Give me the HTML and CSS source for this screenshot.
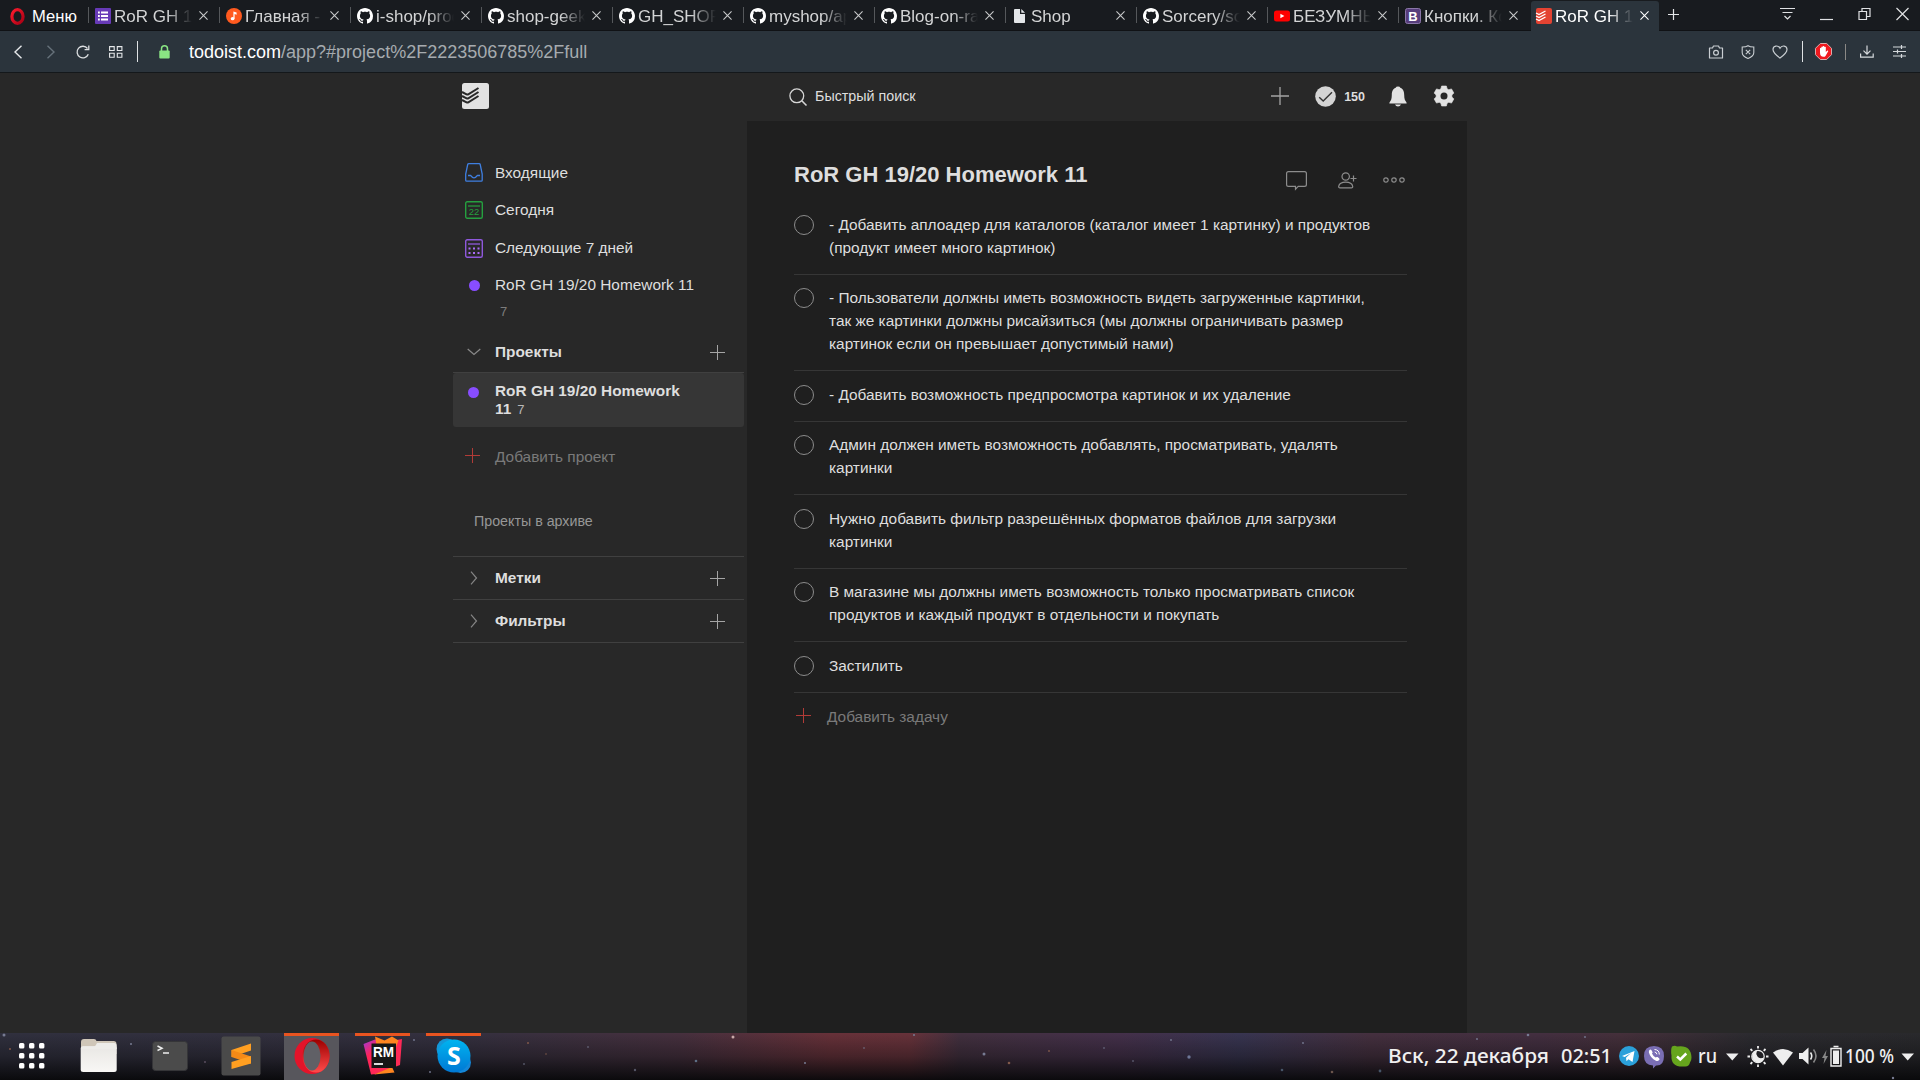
FILE: index.html
```html
<!DOCTYPE html>
<html lang="ru">
<head>
<meta charset="utf-8">
<title>RoR GH 19/20 Homework 11</title>
<link rel="stylesheet" href="styles.css">
</head>
<body>
<svg class="defs" width="0" height="0">
  <defs>
    <linearGradient id="opera" x1="0" x2="1" y1="0" y2="1"><stop offset="0" stop-color="#ff1b2d"/><stop offset="1" stop-color="#a70014"/></linearGradient>
    <linearGradient id="opera-in" x1="0" x2="0" y1="0" y2="1"><stop offset="0" stop-color="#9c0000"/><stop offset="1" stop-color="#ff4b4b"/></linearGradient>
    <linearGradient id="skype" x1="0" x2="0" y1="0" y2="1"><stop offset="0" stop-color="#00b4f0"/><stop offset="1" stop-color="#0078d4"/></linearGradient>
    <linearGradient id="rm" x1="0" x2="1" y1="0" y2="1"><stop offset="0" stop-color="#9a3be0"/><stop offset=".3" stop-color="#ff2358"/><stop offset="1" stop-color="#ff3055"/></linearGradient>
    <linearGradient id="folder" x1="0" x2="0" y1="0" y2="1"><stop offset="0" stop-color="#e9e7e4"/><stop offset="1" stop-color="#f8f7f5"/></linearGradient>
    <symbol id="github" viewBox="0 0 16 16"><path fill="#fff" d="M8 0C3.58 0 0 3.58 0 8c0 3.54 2.29 6.53 5.47 7.59.4.07.55-.17.55-.38 0-.19-.01-.82-.01-1.49-2.01.37-2.53-.49-2.69-.94-.09-.23-.48-.94-.82-1.13-.28-.15-.68-.52-.01-.53.63-.01 1.08.58 1.23.82.72 1.21 1.87.87 2.33.66.07-.52.28-.87.51-1.07-1.78-.2-3.64-.89-3.64-3.95 0-.87.31-1.59.82-2.15-.08-.2-.36-1.02.08-2.12 0 0 .67-.21 2.2.82.64-.18 1.32-.27 2-.27.68 0 1.36.09 2 .27 1.53-1.04 2.2-.82 2.2-.82.44 1.1.16 1.92.08 2.12.51.56.82 1.27.82 2.15 0 3.07-1.87 3.75-3.65 3.95.29.25.54.73.54 1.48 0 1.07-.01 1.93-.01 2.2 0 .21.15.46.55.38A8.013 8.013 0 0 0 16 8c0-4.42-3.58-8-8-8z"/></symbol>
    <symbol id="close" viewBox="0 0 10 10"><path d="M.5.5l9 9M9.500.5l-9 9" fill="none" stroke="currentColor" stroke-width="1.2"/></symbol>
    <symbol id="plus" viewBox="0 0 15 15"><path d="M7.500 0v15M0 7.500h15" fill="none" stroke="currentColor"/></symbol>
    <symbol id="chev" viewBox="0 0 8 14"><path d="M1 .7l5.500 6.300L1 13.300" fill="none" stroke="currentColor" stroke-width="1.200"/></symbol>
  </defs>
</svg>

<header class="tabs">
  <div class="menu"><svg width="16" height="17" viewBox="0 0 16 17"><ellipse cx="7.500" cy="8.500" rx="5.600" ry="6.800" fill="none" stroke="url(#opera)" stroke-width="3.200"/></svg><span>Меню</span></div>
  <div class="tab"><svg class="fav" viewBox="0 0 16 16"><rect width="16" height="16" rx="1" fill="#673ab7"/><path d="M3 4.500h1.800M3 8h1.800M3 11.500h1.800M6 4.500h7M6 8h7M6 11.500h7" stroke="#fff" stroke-width="1.900"/></svg><span class="label">RoR GH 19/20</span><svg class="x"><use href="#close"/></svg></div>
  <div class="tab"><svg class="fav" viewBox="0 0 16 16"><circle cx="8" cy="8" r="8" fill="#ff5a1f"/><ellipse cx="6.600" cy="10.700" rx="1.900" ry="1.600" fill="#fff"/><path d="M7.400 10.700V3.500l3.200 1v2.200l-2-.6v4.600z" fill="#fff"/></svg><span class="label">Главная - Музыка</span><svg class="x"><use href="#close"/></svg></div>
  <div class="tab"><svg class="fav"><use href="#github"/></svg><span class="label">i-shop/products</span><svg class="x"><use href="#close"/></svg></div>
  <div class="tab"><svg class="fav"><use href="#github"/></svg><span class="label">shop-geekhub</span><svg class="x"><use href="#close"/></svg></div>
  <div class="tab"><svg class="fav"><use href="#github"/></svg><span class="label">GH_SHOP/app</span><svg class="x"><use href="#close"/></svg></div>
  <div class="tab"><svg class="fav"><use href="#github"/></svg><span class="label">myshop/app</span><svg class="x"><use href="#close"/></svg></div>
  <div class="tab"><svg class="fav"><use href="#github"/></svg><span class="label">Blog-on-rails</span><svg class="x"><use href="#close"/></svg></div>
  <div class="tab"><svg class="fav" viewBox="0 0 16 16"><path d="M3 1h5v5h5v8.200q0 .8-.8.8H3q-1 0-1-1V2q0-1 1-1zM9.300 1L13 4.700H9.300z" fill="#e3e6e9"/></svg><span class="label">Shop</span><svg class="x"><use href="#close"/></svg></div>
  <div class="tab"><svg class="fav"><use href="#github"/></svg><span class="label">Sorcery/sorcery</span><svg class="x"><use href="#close"/></svg></div>
  <div class="tab"><svg class="fav" viewBox="0 0 16 16"><rect y="2.500" width="16" height="11" rx="2.500" fill="#f00"/><path d="M6.400 5.700v4.600L10.400 8z" fill="#fff"/></svg><span class="label">БЕЗУМНЫЙ</span><svg class="x"><use href="#close"/></svg></div>
  <div class="tab"><svg class="fav" viewBox="0 0 16 16"><rect x=".5" y=".5" width="15" height="15" rx="2" fill="#563d7c" stroke="#8a76a8"/><text x="8" y="12.500" class="boot">B</text></svg><span class="label">Кнопки. Компоненты</span><svg class="x"><use href="#close"/></svg></div>
  <div class="tab active"><svg class="fav" viewBox="0 0 16 16"><rect width="16" height="16" rx="2" fill="#e44332"/><path d="M0 5l3 1.500L9.500 3M0 8l3 1.500L9.500 6M0 11l3 1.500L9.500 9" fill="none" stroke="#fff" stroke-width="1.300"/></svg><span class="label">RoR GH 19/20</span><svg class="x"><use href="#close"/></svg></div>
  <svg class="newtab" width="11" height="11" viewBox="0 0 11 11"><path d="M5.500 0v11M0 5.500h11" stroke="#e4e6e8" stroke-width="1.200"/></svg>
  <div class="winctl">
    <svg width="16" height="14" viewBox="0 0 16 14"><path d="M0 1.500h15M2.500 5.500h10M4.500 9l3 3 3-3" fill="none" stroke="#dfe1e3" stroke-width="1.200"/></svg>
    <svg width="13" height="14" viewBox="0 0 13 14"><path d="M0 12.500h13" stroke="#dfe1e3" stroke-width="1.200"/></svg>
    <svg width="13" height="14" viewBox="0 0 13 14"><path d="M1 4.500h7.500v8H1zM4 4.500v-3h8v8H8.500" fill="none" stroke="#dfe1e3" stroke-width="1.200"/></svg>
    <svg width="13" height="14" viewBox="0 0 13 14"><path d="M.5 1l12 12M12.500 1l-12 12" stroke="#dfe1e3" stroke-width="1.200"/></svg>
  </div>
</header>

<div class="toolbar">
  <svg width="9" height="14" viewBox="0 0 9 14"><path d="M7.500 .7L1 7l6.500 6.300" fill="none" stroke="#e6e8ea" stroke-width="1.400"/></svg>
  <svg class="t-fwd" width="9" height="14" viewBox="0 0 9 14"><path d="M1.500 .7L8 7l-6.500 6.300" fill="none" stroke="#66717a" stroke-width="1.400"/></svg>
  <svg class="t-rel" width="14" height="14" viewBox="0 0 14 14"><path d="M12.300 9.200A5.800 5.800 0 1 1 11.500 3.500M12.800 .5v4.200H8.600" fill="none" stroke="#dcdfe1" stroke-width="1.300"/></svg>
  <svg class="t-grid" width="14" height="12" viewBox="0 0 14 12"><path d="M.6.6h4.600v3.900H.6zM8.300.6h4.600v3.900H8.300zM.6 7.300h4.600v3.900H.6zM8.300 7.300h4.600v3.900H8.300z" fill="none" stroke="#e6e8ea" stroke-width="1.100"/></svg>
  <i class="bar t-bar"></i>
  <svg class="t-lock" width="11" height="14" viewBox="0 0 11 14"><path d="M2.500 6V3.800a3 3 0 0 1 6 0V6" fill="none" stroke="#8ae683" stroke-width="1.500"/><rect x=".3" y="5.500" width="10.400" height="8" rx="1" fill="#8ae683"/></svg>
  <div class="url"><b>todoist.com</b>/app?#project%2F2223506785%2Ffull</div>
  <div class="tools">
    <svg width="16" height="14" viewBox="0 0 16 14"><path d="M1.500 3h3l1-2h5l1 2h3v10h-13z" fill="none" stroke="#c9ced2" stroke-width="1.200" stroke-linejoin="round"/><circle cx="8" cy="7.800" r="2.400" fill="none" stroke="#c9ced2" stroke-width="1.200"/></svg>
    <svg width="14" height="14" viewBox="0 0 14 14"><path d="M7 .7C5 2 3 2 1.200 2v5.500C1.200 11 5 12.700 7 13.400c2-.7 5.800-2.400 5.800-5.900V2C11 2 9 2 7 .7zM4.800 4.800l4.400 4.400M9.200 4.800L4.800 9.200" fill="none" stroke="#c9ced2" stroke-width="1.100"/></svg>
    <svg width="16" height="14" viewBox="0 0 16 14"><path d="M8 13C4 10 1 7.500 1 4.400 1 .5 6.200-.2 8 3.200 9.800-.2 15 .5 15 4.400 15 7.500 12 10 8 13z" fill="none" stroke="#c9ced2" stroke-width="1.200"/></svg>
    <i class="bar"></i>
    <svg width="17" height="17" viewBox="0 0 17 17"><path d="M5.300.5h6.400l4.800 4.800v6.400l-4.800 4.800H5.300L.5 11.700V5.300z" fill="#f0191f" stroke="#d8adad"/><path d="M5 9.500V5.200q.7-.8 1.300 0V4q.8-.9 1.500 0V3.300q.8-.8 1.500 0V4q.8-.7 1.500 0v5l1.500-1.500q1 0 .9.800l-2.700 4.600q-.6.900-2 .9-3.500 0-3.500-4.300z" fill="#fff"/></svg>
    <i class="bar small"></i>
    <svg width="14" height="13" viewBox="0 0 14 13"><path d="M.6 8.500v3.600h12.600V8.500M7 .5V9M3.500 5.700L7 9.200l3.500-3.500" fill="none" stroke="#d5d9dc" stroke-width="1.200"/></svg>
    <svg width="13" height="13" viewBox="0 0 13 13"><path d="M0 2h13M0 6.500h13M0 11h13M8.500 0v4M4.500 4.500v4M8.500 9v4" stroke="#d5d9dc" stroke-width="1.200"/></svg>
  </div>
</div>

<div class="app">
  <div class="topbar">
    <svg class="logo" width="27" height="26" viewBox="0 0 27 26"><rect width="27" height="26" rx="2.500" fill="#e2e2e2"/><path d="M0 9l4.500 2.300q1 .4 1.800 0L16.500 5M0 13l4.500 2.300q1 .4 1.800 0L16.500 9M0 17l4.500 2.300q1 .4 1.800 0L16.500 13" fill="none" stroke="#282828" stroke-width="2"/></svg>
    <svg class="mag" width="19" height="19" viewBox="0 0 19 19"><circle cx="7.800" cy="7.800" r="6.900" fill="none" stroke="#d6d6d6" stroke-width="1.300"/><path d="M12.800 12.800l4.700 4.700" stroke="#d6d6d6" stroke-width="1.600"/></svg>
    <span class="search">Быстрый поиск</span>
    <svg class="add" width="18" height="18" viewBox="0 0 18 18"><path d="M9 0v18M0 9h18" stroke="#a4a4a4" stroke-width="1.300"/></svg>
    <svg class="done" width="21" height="21" viewBox="0 0 21 21"><circle cx="10.500" cy="10.500" r="10.300" fill="#d4d4d4"/><path d="M4.200 11.200l4 3.900 8.800-8.800" fill="none" stroke="#333" stroke-width="1.400"/></svg>
    <b class="karma">150</b>
    <svg class="bell" width="18" height="21" viewBox="0 0 18 21"><path d="M9 .5q2 0 2.300 1.300C14.500 3 15.200 6 15.200 9c0 4 .8 5.500 2 7 .7 1 .6 1.500-.2 1.500H1c-.8 0-.9-.5-.2-1.500 1.200-1.500 2-3 2-7 0-3 .7-6 3.900-7.200Q7 .5 9 .5zM6 18.500h6q-.8 2-3 2t-3-2z" fill="#e2e2e2"/></svg>
    <svg class="gear" width="20" height="20" viewBox="0 0 20 20"><path d="M7.600 0h4.800l.7 2.700 1.700 1 2.700-.8 2.400 4.200-2 1.900v2l2 1.900-2.400 4.200-2.700-.8-1.700 1-.7 2.700H7.600l-.7-2.700-1.700-1-2.700.8L.1 12.900l2-1.900V9l-2-1.900 2.400-4.200 2.700.8 1.700-1z" fill="#e2e2e2" stroke="#e2e2e2" stroke-width=".6" stroke-linejoin="round"/><circle cx="10" cy="10" r="3.500" fill="#282828"/></svg>
  </div>
  <div class="columns">
    <nav class="side">
      <div class="row r1"><svg width="18" height="19" viewBox="0 0 18 19"><path d="M3.800.7h10.400q.8 0 1 .8l2 9.500v6.200q0 1-1 1H1.700q-1 0-1-1V11l2-9.500q.2-.8 1.100-.8zM3 12.500h2.500q.5 0 .8.600 1 1.700 2.700 1.700t2.700-1.700q.3-.6.8-.6H15" fill="none" stroke="#3f7fe0" stroke-width="1.300"/></svg><span>Входящие</span></div>
      <div class="row r2"><svg width="18" height="18" viewBox="0 0 18 18"><rect x=".7" y=".7" width="16.600" height="16.600" rx="1.500" fill="none" stroke="#25a03f" stroke-width="1.400"/><path d="M3 5h12" stroke="#25a03f" stroke-width="1.200"/><text x="9" y="14" class="daynum" textLength="10.500" lengthAdjust="spacingAndGlyphs">22</text></svg><span>Сегодня</span></div>
      <div class="row r3"><svg width="18" height="19" viewBox="0 0 18 19"><rect x=".7" y=".7" width="16.600" height="17.600" rx="1.500" fill="none" stroke="#8f58dc" stroke-width="1.400"/><path d="M3 5h12" stroke="#8f58dc" stroke-width="1.300"/><path d="M3.500 9.500h2M8 9.500h2M12.500 9.500h2M3.500 14h2M8 14h2M12.500 14h2" stroke="#a96bf5" stroke-width="2"/></svg><span>Следующие 7 дней</span></div>
      <div class="row r4"><i class="dot"></i><span>RoR GH 19/20 Homework 11</span></div>
      <div class="count">7</div>
      <div class="row head h1"><svg width="14" height="8" viewBox="0 0 14 8"><path d="M.7 1L7 6.500 13.300 1" fill="none" stroke="#8a8a8a" stroke-width="1.200"/></svg><b>Проекты</b><svg class="p"><use href="#plus"/></svg></div>
      <div class="selected"><i class="dot"></i><div><b>RoR GH 19/20 Homework 11</b><small>7</small></div></div>
      <div class="row addp"><svg class="p red"><use href="#plus"/></svg><span>Добавить проект</span></div>
      <div class="archive">Проекты в архиве</div>
      <div class="row head"><svg class="fold" width="8" height="14"><use href="#chev"/></svg><b>Метки</b><svg class="p"><use href="#plus"/></svg></div>
      <div class="row head last"><svg class="fold" width="8" height="14"><use href="#chev"/></svg><b>Фильтры</b><svg class="p"><use href="#plus"/></svg></div>
    </nav>
    <main class="panel">
      <div class="title"><h1>RoR GH 19/20 Homework 11</h1>
        <svg width="21" height="19" viewBox="0 0 21 19"><path d="M2.500.6h16q1.900 0 1.900 1.900v11q0 1.900-1.900 1.900h-6.300l-2.700 2.900v-2.900h-7Q.6 15.400.6 13.500v-11Q.6.6 2.500.6z" fill="none" stroke="#8d8d8d" stroke-width="1.200"/></svg>
        <svg class="person" width="19" height="17" viewBox="0 0 19 17"><circle cx="7.700" cy="4.500" r="3.700" fill="none" stroke="#8d8d8d" stroke-width="1.200"/><path d="M2 15.800q-1.500 0-1.300-1.500Q1.500 10.200 7.700 10.200t7 4.100q.2 1.500-1.300 1.500zM12.500 6.500h6M15.500 3.500v6" fill="none" stroke="#8d8d8d" stroke-width="1.200"/></svg>
        <svg class="more" width="22" height="6" viewBox="0 0 22 6"><g fill="none" stroke="#8d8d8d" stroke-width="1.200"><circle cx="3" cy="3" r="2.200"/><circle cx="11" cy="3" r="2.200"/><circle cx="19" cy="3" r="2.200"/></g></svg>
      </div>
      <ul class="tasks">
        <li><i></i><p>- Добавить аплоадер для каталогов (каталог имеет 1 картинку) и продуктов<br>(продукт имеет много картинок)</p></li>
        <li><i></i><p>- Пользователи должны иметь возможность видеть загруженные картинки,<br>так же картинки должны рисайзиться (мы должны ограничивать размер<br>картинок если он превышает допустимый нами)</p></li>
        <li><i></i><p>- Добавить возможность предпросмотра картинок и их удаление</p></li>
        <li><i></i><p>Админ должен иметь возможность добавлять, просматривать, удалять<br>картинки</p></li>
        <li><i></i><p>Нужно добавить фильтр разрешённых форматов файлов для загрузки<br>картинки</p></li>
        <li><i></i><p>В магазине мы должны иметь возможность только просматривать список<br>продуктов и каждый продукт в отдельности и покупать</p></li>
        <li><i></i><p>Застилить</p></li>
      </ul>
      <div class="addtask"><svg class="p red"><use href="#plus"/></svg><span>Добавить задачу</span></div>
    </main>
  </div>
</div>

<footer class="dock">
  <svg class="stars" width="1920" height="47" viewBox="0 0 1920 47"><g fill="#777b92"><circle cx="4" cy="2" r="1.500"/><circle cx="131" cy="11" r="1"/><circle cx="733" cy="4" r="1.500" fill="#c9a9a9"/><circle cx="914" cy="2" r="1"/><circle cx="984" cy="21" r="1.500"/><circle cx="1189" cy="24" r="1.700" fill="#6d7696"/><circle cx="1009" cy="30" r="1.300" fill="#80594a"/><circle cx="696" cy="28" r="1.300" fill="#5e6f85"/><circle cx="805" cy="30" r="1"/><circle cx="635" cy="37" r="1.200" fill="#556"/><circle cx="528" cy="10" r="1" fill="#80594a"/><circle cx="588" cy="14" r=".8"/><circle cx="546" cy="21" r=".8" fill="#80594a"/><circle cx="864" cy="15" r=".8"/><circle cx="1049" cy="18" r=".9" fill="#80594a"/><circle cx="1282" cy="37" r="1.300" fill="#465568"/><circle cx="1332" cy="39" r="1.300" fill="#6b554c"/><circle cx="1380" cy="38" r="1.400" fill="#465568"/><circle cx="1303" cy="10" r=".9"/><circle cx="1171" cy="7" r=".9"/><circle cx="1528" cy="2" r="1.300"/><circle cx="1585" cy="4" r=".9"/><circle cx="1477" cy="6" r=".9"/><circle cx="10" cy="16" r="1" fill="#80594a"/><circle cx="430" cy="39" r=".9"/><circle cx="414" cy="7" r=".9"/><circle cx="205" cy="29" r=".9" fill="#5f5364"/><circle cx="524" cy="31" r=".8"/><circle cx="1104" cy="15" r=".8"/><circle cx="1133" cy="28" r=".8"/><circle cx="1893" cy="45" r="1.200"/></g></svg>
  <div class="apps">
    <div class="a"><svg width="26" height="26" viewBox="0 0 26 26"><g fill="#fff"><rect width="5.400" height="5.400" rx="1.500"/><rect x="10" width="5.400" height="5.400" rx="1.500"/><rect x="20" width="5.400" height="5.400" rx="1.500"/><rect y="10" width="5.400" height="5.400" rx="1.500"/><rect x="10" y="10" width="5.400" height="5.400" rx="1.500"/><rect x="20" y="10" width="5.400" height="5.400" rx="1.500"/><rect y="20" width="5.400" height="5.400" rx="1.500"/><rect x="10" y="20" width="5.400" height="5.400" rx="1.500"/><rect x="20" y="20" width="5.400" height="5.400" rx="1.500"/></g></svg></div>
    <div class="a"><svg width="38" height="36" viewBox="0 0 38 36"><path d="M1 4q0-3 3-3h10q2 0 2.500 2h17q3 0 3 3v10H1z" fill="#cfc6b8"/><rect x=".7" y="8" width="36" height="26" rx="2.500" fill="url(#folder)"/><path d="M17 5h17q2.700 0 2.700 3v3H1V9h12.500q1.500 0 3.500-4z" fill="#edece9"/></svg></div>
    <div class="a"><svg width="36" height="30" viewBox="0 0 36 30"><rect x=".5" y=".5" width="35" height="29" rx="3" fill="#4b4b4b" stroke="#353538"/><path d="M5.500 5l4.500 2.300L5.500 9.500M11 12h6" fill="none" stroke="#eee" stroke-width="1.500"/></svg></div>
    <div class="a"><svg width="40" height="40" viewBox="0 0 40 40"><rect x=".5" y=".5" width="39" height="39" rx="2" fill="#4a4a4a"/><path d="M10.500 14L30 7.500v7L10.500 21z" fill="#ff9f21"/><path d="M10.500 14l19.500 6.500v7L10.500 21z" fill="#f58a17"/><path d="M10.500 26L30 20v7.500L10.500 33z" fill="#ff9f21"/></svg></div>
    <div class="a run on"><svg width="36" height="36" viewBox="0 0 36 36"><ellipse cx="18" cy="18" rx="17.500" ry="18" fill="#e3142a"/><ellipse cx="22" cy="18" rx="13.500" ry="16.500" fill="url(#opera-in)"/><ellipse cx="18" cy="18" rx="8.500" ry="14.500" fill="#606066"/></svg></div>
    <div class="a run"><svg width="40" height="40" viewBox="0 0 40 40"><path d="M.5 8L12 3.500l14 2 13-2.500-2 26-24 9L8 38.500z" fill="url(#rm)"/><path d="M12 .500l9.500 4L29 .500l6.500 4-3 8H14zM11 38.500L29 31l2.500 5.500z" fill="#ff8520"/><rect x="8.500" y="7.500" width="24.500" height="24.500" fill="#161616"/><text x="20.500" y="20.500" class="rmtxt" textLength="21" lengthAdjust="spacingAndGlyphs">RM</text><path d="M11 28h9" stroke="#fff" stroke-width="1.700"/></svg></div>
    <div class="a run"><svg width="36" height="36" viewBox="0 0 36 36"><circle cx="11" cy="11" r="10.500" fill="#1397d8"/><circle cx="24.500" cy="24.500" r="10.500" fill="#1487d8"/><circle cx="18" cy="18" r="16.500" fill="url(#skype)"/><text x="18" y="27" class="skytxt">S</text></svg></div>
  </div>
  <div class="status">
    <svg width="532" height="47" viewBox="0 0 532 47">
      <g class="sys"><text x="0" y="30" textLength="161" lengthAdjust="spacingAndGlyphs">Вск, 22 декабря</text><text x="173" y="30" textLength="51" lengthAdjust="spacingAndGlyphs">02:51</text><text x="310" y="30" textLength="19" lengthAdjust="spacingAndGlyphs">ru</text><text x="457" y="30" textLength="49" lengthAdjust="spacingAndGlyphs">100 %</text></g>
      <circle cx="241" cy="23" r="10" fill="#2ba0da"/><path d="M234 23l12.500-5-2 11-4-2.800-2 2-.5-3.500 5-4.600-6.300 4z" fill="#fff"/>
      <path d="M266 13q10 0 10 10t-8 9.500l-3 3v-3q-9-.5-9-9.500 0-10 10-10z" fill="#7a6eb4"/><path d="M261.500 17q1-1 2 .3l1 1.600q.4.800-.5 1.700 1 2.700 3.700 3.900.9-1 1.800-.4l1.600 1.100q1 .9 0 1.900-1.300 1.600-3.200.6-5.500-2.800-7-8.300-.2-1.400.6-2.400z" fill="#fff"/><path d="M266.500 16.500q4.800.3 4.800 5M266.700 19q2 .2 2.200 2.300" fill="none" stroke="#fff"/>
      <path d="M284 13.500q3-1.500 5 0 14-2 14.500 11 0 3-1.500 5-1 4.500-5.500 4-14 1-13-11-1-6 .5-9z" fill="#66a51d"/><path d="M289 23.500l3.300 3 6-6" fill="none" stroke="#fff" stroke-width="2.500"/>
      <path d="M338 20.500h12.500l-6.200 7zM513.500 20.500h12.500l-6.300 7z" fill="#eee"/>
      <g stroke="#eee" fill="none"><circle cx="370" cy="23.500" r="6.200" stroke-width="1.200"/><path d="M369 17.500a6 6 0 1 0 7 7q-4.500 2-6.500-1t-.5-6z" fill="#eee" stroke="none"/><path d="M370 13v2.500M370 31.500V34M359.500 23.500h2.500M378 23.500h2.500M362.500 16l1.800 1.800M375.700 29.200l1.800 1.800M362.500 31l1.800-1.800M375.700 17.800l1.800-1.800" stroke-width="1.800"/></g>
      <path d="M385 19.500q10-7 20 0L395 32.500z" fill="#eee"/>
      <path d="M411 20h3.500l6-5.500v17l-6-5.500H411z" fill="#eee"/><path d="M422.500 19.500q2.500 3.500 0 7" fill="none" stroke="#eee" stroke-width="1.600"/><path d="M425.500 16.500q5 6.500 0 13" fill="none" stroke="#888" stroke-width="1.600"/>
      <path d="M438.500 17l-4.500 8h2.500l-1 6 4.500-8h-2.500z" fill="#888"/>
      <path d="M443 15.500h10v17.500h-10zM445.500 13.500h5" fill="none" stroke="#eee" stroke-width="1.400"/><rect x="445" y="17.500" width="6" height="13.500" fill="#eee"/>
    </svg>
  </div>
</footer>
</body>
</html>
```

FILE: styles.css
```css
* { box-sizing: border-box; }
body { margin: 0; width: 1920px; height: 1080px; overflow: hidden; display: flex; flex-direction: column; background: #282828; color: #dedede; font-family: "Liberation Sans", Arial, sans-serif; font-size: 15.4px; }
svg { display: block; flex: none; overflow: visible; }
.defs { position: absolute; }

.tabs { height: 31px; flex: none; display: flex; align-items: center; background: #181b1f; box-shadow: inset 0 -1px #101215; font-size: 17px; color: #d3d4d5; }
.menu { width: 88px; padding-left: 10px; display: flex; align-items: center; gap: 6px; color: #fff; padding-top: 1px; }
.menu span { font-size: 16.600px; padding-top: 1px; }
.tab { position: relative; width: 131px; height: 31px; flex: none; padding-left: 7px; display: flex; align-items: center; }
.tab::before { content: ""; position: absolute; left: 0; top: 7px; width: 1px; height: 16px; background: #55585b; }
.fav { width: 16px; height: 16px; margin-right: 3px; }
.label { width: 78px; overflow: hidden; white-space: nowrap; line-height: 24px; padding-top: 2px; -webkit-mask-image: linear-gradient(90deg, #000 68%, transparent 100%); mask-image: linear-gradient(90deg, #000 68%, transparent 100%); }
.x { width: 9px; height: 9px; margin-left: 7px; color: #c8cacb; }
.boot { font: bold 13px "Liberation Sans", sans-serif; fill: #fff; text-anchor: middle; }
.active { background: #2b343c; border-radius: 3px 3px 0 0; width: 128px; margin: 1px 1px 0 2px; padding-left: 5px; height: 30px; color: #fff; }
.active .label { padding-top: 1px; }
.active::before { display: none; }
.active .x, .active .fav { margin-top: -1px; }
.active .x { color: #fff; }
.newtab { margin-left: 8px; margin-top: -2px; }
.winctl { margin-left: auto; padding-right: 11px; display: flex; gap: 25px; margin-top: -3px; }
.winctl svg:first-child { margin-right: -1px; }

.toolbar { height: 42px; flex: none; background: #2b343c; border-bottom: 1px solid #14181b; display: flex; align-items: center; padding-left: 14px; }
.t-fwd { margin-left: 23px; }
.t-rel { margin-left: 21px; }
.t-grid { margin-left: 19px; }
.bar { width: 1px; height: 21px; background: #dfe2e4; }
.bar.small { height: 16px; background: #8b8986; }
.t-bar { margin-left: 14px; }
.t-lock { margin-left: 21px; }
.url { margin-left: 19px; font-size: 18px; color: #a6abaf; padding-top: 1px; }
.url b { font-weight: normal; color: #fff; }
.tools { margin-left: auto; padding-right: 14px; display: flex; align-items: center; }
.tools > :nth-child(n+2) { margin-left: 17px; }
.tools > :nth-child(4) { margin-left: 14px; }
.tools > :nth-child(5) { margin-left: 12px; }
.tools > :nth-child(6) { margin-left: 13px; }
.tools > :nth-child(7) { margin-left: 14px; }
.tools > :nth-child(8) { margin-left: 19px; }

.app { flex: 1; width: 1014px; margin-left: 453px; display: flex; flex-direction: column; }
.topbar { height: 48px; flex: none; display: flex; align-items: center; padding: 0 13px 2px 9px; }
.mag { margin-left: 300px; margin-top: 2px; }
.search { margin-left: 7px; font-size: 14.300px; }
.add { margin-left: auto; }
.done { margin-left: 26px; }
.karma { margin-left: 8px; font-size: 12.500px; padding-top: 1px; }
.bell { margin-left: 24px; }
.gear { margin-left: 27px; }

.columns { flex: 1; display: flex; }
.side { width: 291px; margin-right: 3px; padding: 33px 0 0; }
.row { display: flex; align-items: center; height: 37.500px; padding-left: 12px; }
.row span, .row b { margin-left: 12px; }
.r2 span { padding-bottom: 1px; }
.r3 svg { margin-top: 1px; }
.r4 span { padding-bottom: 2px; }
.r4 { height: 38px; }
.dot { width: 11px; height: 11px; border-radius: 50%; background: #884dff; margin-left: 3px; flex: none; }
.row .dot { margin-left: 3.500px; }
.r4 span { margin-left: 15.500px; }
.daynum { font: 9.500px "Liberation Sans", sans-serif; fill: #25a03f; text-anchor: middle; }
.count { height: 26px; padding: 0 0 0 47px; margin-top: -1px; margin-bottom: 1px; font-size: 13px; line-height: 15px; color: #7c7c7c; }
.head { height: 43px; border-top: 1px solid #404040; }
.head > svg:first-child { margin-left: 2px; margin-right: 2px; }
.head > .fold:first-child { margin-left: 5px; margin-right: 5px; color: #858585; }
.p { width: 15px; height: 15px; color: #a5a5a5; }
.head .p { margin-left: auto; margin-right: 19px; margin-top: 1px; }
.h1 { border-top: 0; border-bottom: 1px solid #404040; height: 42px; padding-top: 1px; }
.last { border-bottom: 1px solid #404040; height: 44px; }
.selected { height: 54px; background: #363636; border-radius: 3px; display: flex; padding: 9px 0 0 11px; line-height: 18px; }
.selected .dot { margin: 5px 0 0 4px; }
.selected > div { margin-left: 16px; width: 200px; }
.selected small { margin-left: 6px; font-size: 13px; color: #b8b8b8; }
.p.red { color: #b23b37; }
.addp { height: 60px; color: #7a7a7a; }
.addp .p { margin-top: -2px; }
.addp span { margin-left: 15px; }
.archive { height: 69px; padding: 25px 0 0 21px; font-size: 14.250px; line-height: 18px; color: #979797; }

.panel { width: 720px; background: #1f1f1f; padding: 0 60px 0 47px; }
.title { height: 80px; display: flex; align-items: center; padding: 38px 2px 0 0; }
h1 { font-size: 22px; margin: -11px auto 0 0; }
.person { margin-left: 31px; }
.more { margin-left: 26px; }
.tasks { list-style: none; margin: 0; padding: 0; }
.tasks li { display: flex; border-bottom: 1px solid #363636; padding: 11.500px 0 15px; line-height: 23px; }
.tasks i { width: 20px; height: 20px; border: 1px solid #8c8c8c; border-radius: 50%; margin-top: 2px; }
.tasks p { margin: 0 0 0 15px; white-space: nowrap; }
.addtask { display: flex; align-items: center; height: 48px; padding-left: 2px; color: #7a7a7a; }
.addtask .p { margin-top: -2px; }
.addtask span { margin-left: 16px; }

.dock { height: 47px; flex: none; position: relative; display: flex; background: linear-gradient(180deg, rgba(8,8,10,0), rgba(8,8,10,.35) 50%, rgba(8,8,10,.95)), linear-gradient(90deg, #30303e 0, #34303f 460px, #46303e 680px, #673139 830px, #67323a 910px, #42303f 960px, #44304a 1120px, #383551 1240px, #45303f 1370px, #432f40 1540px, #45303b 1620px, #2c2b30 1750px, #29292c 1920px); }
.stars { position: absolute; left: 0; top: 0; }
.apps { position: relative; display: flex; gap: 16px; }
.apps .a { width: 55px; display: flex; align-items: center; justify-content: center; border-top: 3px solid transparent; padding-bottom: 5px; padding-top: 1px; }
.apps .a:first-child { margin-left: 4px; margin-right: -4px; }
.apps .run { border-top-color: #e95420; }
.apps .on { background: #57565c; }
.rmtxt { font: bold 14px "Liberation Sans", sans-serif; fill: #fff; text-anchor: middle; }
.skytxt { font: bold 25px "Noto Sans", sans-serif; fill: #fff; text-anchor: middle; }
.status { position: relative; margin-left: auto; }
.sys { font: 500 19px "Noto Sans", sans-serif; fill: #f0f0f0; }
```
